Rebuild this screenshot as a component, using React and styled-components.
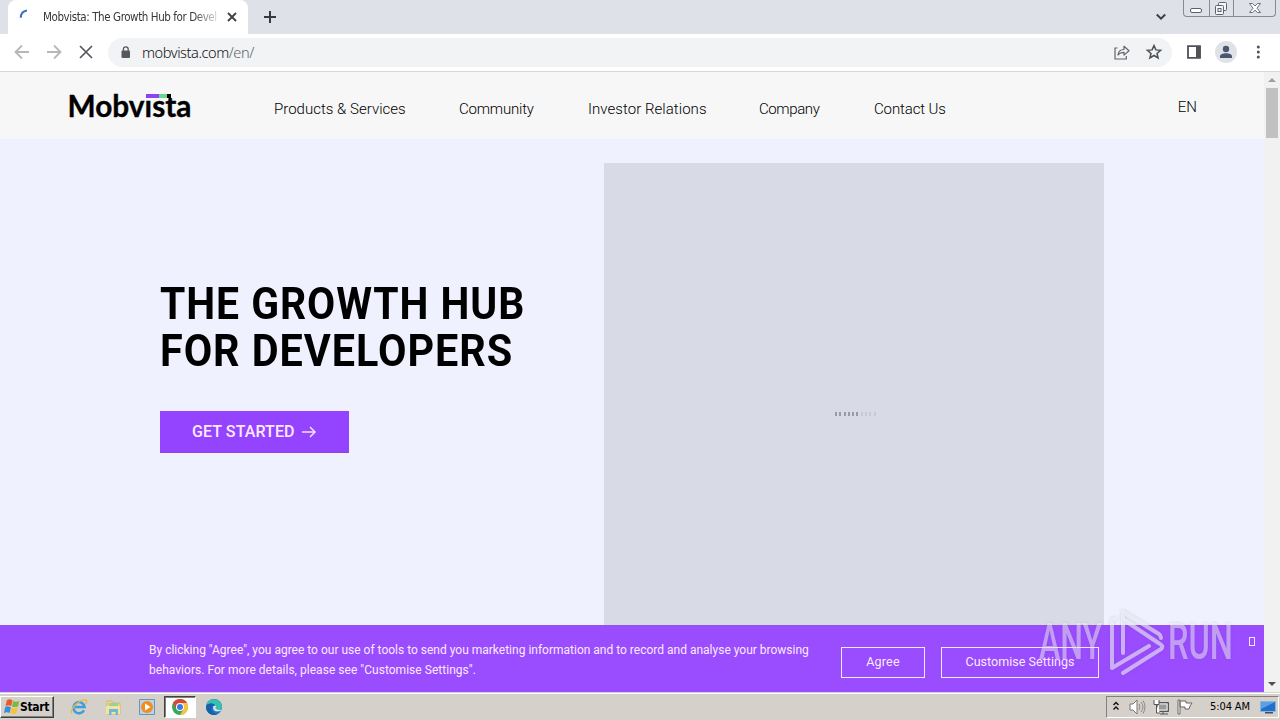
import React from "react";
import styled, { createGlobalStyle } from "styled-components";

const Global = createGlobalStyle`
  *{box-sizing:border-box}
  body{margin:0;overflow:hidden;background:#fff;font-family:Roboto,"Liberation Sans",sans-serif}
`;
const Screen = styled.div`width:1280px;height:720px;display:flex;flex-direction:column;position:relative;overflow:hidden;`;
const Spacer = styled.div`flex:1;`;

const TabStrip = styled.div`height:34px;flex:none;background:#dee1e8;display:flex;align-items:flex-start;`;
const Tab = styled.div`
  margin-left:8px;width:240px;height:34px;background:#fff;border-radius:8px 8px 0 0;display:flex;align-items:center;padding:0 10px 0 11px;
`;
const TabTitle = styled.div`
  margin-left:8px;width:174px;overflow:hidden;white-space:nowrap;color:#34373c;
  font:11.5px/18px "DejaVu Sans Condensed","DejaVu Sans",sans-serif;font-stretch:condensed;letter-spacing:-0.42px;
  mask-image:linear-gradient(90deg,#000 86%,rgba(0,0,0,.2) 100%);
`;
const IconBox = styled.div`
  flex:none;width:${p => p.$w}px;height:${p => p.$h || p.$w}px;margin-left:${p => p.$ml || 0}px;
  svg{display:block;width:100%;height:100%;overflow:visible}
`;
const WindowButtons = styled.div`display:flex;width:93px;height:17px;margin:0 4px 0 17px;border:1px solid #858a93;border-top:0;border-radius:0 0 4px 4px;overflow:hidden;`;
const WindowButton = styled.div`
  width:${p => p.$w}px;display:flex;justify-content:center;align-items:center;
  & + &{border-left:1px solid #858a93}
  svg{display:block}
`;
const Toolbar = styled.div`height:38px;flex:none;background:#fff;border-bottom:1px solid #d6d8dc;display:flex;align-items:center;padding:0 14px 1px;`;
const AddressBar = styled.div`
  flex:none;margin-left:16px;width:1064px;height:29px;border-radius:15px;background:#f1f3f5;display:flex;align-items:center;padding:0 10px 0 13px;
`;
const Url = styled.div`
  margin:0 0 0 11px;font:300 14.6px/20px "Noto Sans",sans-serif;color:#111;white-space:nowrap;letter-spacing:-0.45px;
  span{color:#5f6368}
`;
const Avatar = styled.div`flex:none;width:22px;height:22px;border-radius:50%;background:#dfe2e7;margin-left:14px;display:flex;align-items:center;justify-content:center;`;

const Viewport = styled.div`height:620px;flex:none;display:flex;`;
const Page = styled.div`width:1264px;height:620px;background:#eff1fe;display:flex;flex-direction:column;`;
const Scrollbar = styled.div`width:16px;background:#f1f1f1;display:flex;flex-direction:column;align-items:center;`;
const ScrollArrow = styled.div`
  width:16px;height:16px;display:flex;align-items:center;justify-content:center;
  &::before{content:"";border:4px solid transparent;border-top:0;border-bottom:4px solid #a0a0a0;}
  ${p => p.$down && `&::before{border:4px solid transparent;border-top:4px solid #505050;border-bottom:0;}`}
`;
const ScrollThumb = styled.div`width:12px;height:50px;background:#c1c1c1;`;

const Header = styled.header`height:67px;flex:none;background:#f7f7f7;display:flex;padding:0 67px 0 68px;`;
const Logo = styled.svg`width:124px;height:28px;margin-top:20px;overflow:visible;`;
const Nav = styled.nav`display:flex;margin-left:82px;padding-top:27px;`;
const NavItem = styled.a`
  width:${p => p.$w}px;margin-right:${p => p.$gap}px;white-space:nowrap;color:#000;
  font:300 15px/20px Roboto,sans-serif;letter-spacing:${p => p.$ls}px;
`;
const Language = styled.div`padding-top:25px;font:300 15px/20px Roboto,sans-serif;letter-spacing:0;color:#000;`;

const Hero = styled.main`height:486px;flex:none;display:flex;padding:24px 160px 0;`;
const Pitch = styled.section`width:444px;padding-top:118px;`;
const Title = styled.h1`margin:0;font:700 44px/47px Roboto,sans-serif;color:#000;white-space:nowrap;`;
const TitleLine = styled.span`display:block;letter-spacing:1px;transform:scaleX(${p => p.$stretch});transform-origin:left;`;
const CallToAction = styled.button`
  margin-top:36px;width:189px;height:42px;border:0;border-bottom:1px solid #8549d2;background:#9443ff;color:#fdeaff;display:flex;align-items:center;padding:0 32px;
  font:500 16px/20px Roboto,sans-serif;letter-spacing:.1px;white-space:nowrap;
`;
const Media = styled.section`width:500px;height:462px;background:#d8dbe5;padding:249px 0 0 231px;`;
const Loader = styled.div`display:flex;gap:2px;`;
const LoaderBar = styled.i`width:2px;height:4px;margin-right:.3px;background:${p => p.$on ? "#999ba3" : "#c7cad2"};`;

const CookieBar = styled.footer`height:67px;flex:none;background:#9a4cff;border-top:1px solid #9552e6;display:flex;color:#fbeaff;padding-left:149px;`;
const CookieText = styled.p`margin:14px 0 0;width:692px;font:400 12px/20px Roboto,sans-serif;`;
const CookieLine = styled.span`display:block;white-space:nowrap;letter-spacing:${p => p.$ls}px;`;
const CookieButton = styled.button`
  margin:21px 16px 0 0;width:${p => p.$w}px;height:31px;border:1px solid #fbeaff;background:transparent;color:#fbeaff;
  font:400 12.5px/18px Roboto,sans-serif;letter-spacing:${p => p.$ls}px;padding:0 0 1px;white-space:nowrap;
`;
const CloseGlyph = styled.div`width:6px;height:9px;border:1px solid #fbeaff;margin:11px 0 0 134px;`;

const Taskbar = styled.div`
  height:28px;flex:none;background:#d5d0c9;border-top:1px solid #d8d5cf;box-shadow:inset 0 1px #fff;display:flex;align-items:center;padding:1px 1px 0 0;
`;
const Start = styled.div`
  width:54px;height:22px;border:1px solid;border-color:#fff #404040 #404040 #fff;box-shadow:inset -1px -1px #808080;display:flex;align-items:center;padding-left:3px;
  font:700 12px/18px "DejaVu Sans Condensed","DejaVu Sans",sans-serif;letter-spacing:-0.35px;color:#000;
`;
const ActiveTask = styled.div`
  margin-left:9px;width:32px;height:22px;background:#fff;border:1px solid;border-color:#404040 #fff #fff #404040;box-shadow:inset 1px 1px #808080;
  display:flex;align-items:center;justify-content:center;
`;
const Tray = styled.div`
  width:173px;height:22px;border:1px solid;border-color:#808080 #fff #fff #808080;display:flex;align-items:center;padding-left:6px;
`;
const Clock = styled.div`width:43px;margin-left:16px;font:11px/18px "DejaVu Sans Condensed","DejaVu Sans",sans-serif;letter-spacing:-0.1px;white-space:nowrap;color:#000;`;
const Watermark = styled.svg`position:absolute;left:1030px;top:605px;width:210px;height:72px;overflow:visible;filter:drop-shadow(0 0 1.5px rgba(90,80,130,.45));`;

const navItems = [
  ["Products & Services", 132, 53, 0.02],
  ["Community", 76, 53, -0.2],
  ["Investor Relations", 119, 52, 0.05],
  ["Company", 61, 54, -0.4],
  ["Contact Us", 72, 0, -0.12],
];

const Arrow = ({ flip }) => (
  <svg viewBox="0 0 16 16" fill="none" stroke="#b5b7ba" strokeWidth="1.8">
    <path d={flip ? "M1 8h13M8 1.5 14.5 8 8 14.5" : "M15 8H2M8 1.5 1.5 8 8 14.5"} />
  </svg>
);

const Browser = () => (
  <>
    <TabStrip>
      <Tab>
        <IconBox $w={16}><svg viewBox="0 0 16 16" fill="none" stroke="#3d6fc2" strokeWidth="2"><path d="M1.8 8.8C1.8 5 4.2 2.2 8 1.6" /></svg></IconBox>
        <TabTitle>Mobvista: The Growth Hub for Developers</TabTitle>
        <IconBox $w={8} $ml={11}><svg viewBox="0 0 8 8" stroke="#3e4146" strokeWidth="1.8"><path d="M0 0l8 8M8 0 0 8" /></svg></IconBox>
      </Tab>
      <IconBox $w={12} $h={34} $ml={16}><svg viewBox="0 0 12 34" stroke="#36393e" strokeWidth="2"><path d="M0 17h12M6 11v12" /></svg></IconBox>
      <Spacer />
      <IconBox $w={10} $h={34}><svg viewBox="0 0 10 34" fill="none" stroke="#3c4047" strokeWidth="2"><path d="m.8 14.5 4.2 4.2 4.2-4.2" /></svg></IconBox>
      <WindowButtons>
        <WindowButton $w={25}><svg width="13" height="17"><rect x="0.5" y="8.5" width="11" height="4" rx="1.5" fill="#fff" stroke="#5d626b" /></svg></WindowButton>
        <WindowButton $w={25}><svg width="14" height="17" fill="#f4f5f7" stroke="#5d626b"><rect x="3.5" y="2.5" width="8" height="8" rx="1" /><rect x="0.5" y="5.5" width="8" height="9" rx="1" /><rect x="3" y="8.5" width="3" height="3" /></svg></WindowButton>
        <WindowButton $w={42}><svg width="14" height="17" fill="#fff" stroke="#5d626b" strokeWidth=".9"><path d="M1.500 3.500h3L7 6l2.500-2.500h3L9 8.200l3.500 4.300h-3L7 10.200 4.500 12.500h-3L5 8.200z" /></svg></WindowButton>
      </WindowButtons>
    </TabStrip>
    <Toolbar>
      <IconBox $w={16}><Arrow /></IconBox>
      <IconBox $w={16} $ml={16}><Arrow flip /></IconBox>
      <IconBox $w={12} $ml={18}><svg viewBox="0 0 12 12" stroke="#55585c" strokeWidth="1.7"><path d="M0 0l12 12M12 0 0 12" /></svg></IconBox>
      <AddressBar>
        <IconBox $w={10} $h={13}><svg viewBox="0 0 10 13"><rect x="0.5" y="4.500" width="8.500" height="7.5" rx="1" fill="#55585d" /><path d="M2.400 5V3.200a2.400 2.400 0 0 1 4.800 0V5" fill="none" stroke="#55585d" strokeWidth="1.300" /></svg></IconBox>
        <Url>mobvista.com<span>/en/</span></Url>
        <Spacer />
        <IconBox $w={16}><svg viewBox="0 0 16 16" fill="none" stroke="#62666b" strokeWidth="1.2"><path d="M3.500 4H1v11h11.300v-3" /><path d="M4 11c.4-3.800 2.400-5.400 6-5.500V2.300L15 6.700l-5 4.400V8.300C7.200 8.300 5.500 9 4 11z" strokeLinejoin="round" /></svg></IconBox>
        <IconBox $w={16} $ml={16}><svg viewBox="0 0 16 16" fill="none" stroke="#4c5157" strokeWidth="1.5"><path d="m8 1.600 1.900 4.300 4.700.4-3.600 3.100 1.100 4.600L8 11.500 3.900 14 5 9.400 1.400 6.300l4.700-.4z" /></svg></IconBox>
      </AddressBar>
      <IconBox $w={14} $ml={15}><svg viewBox="0 0 14 14"><path d="M1 1.200h12v11.600H1z" fill="none" stroke="#505258" strokeWidth="1.800" /><path d="M9 1h4.500v12H9z" fill="#505258" /></svg></IconBox>
      <Avatar><svg width="14" height="14" fill="#4c5670"><circle cx="7" cy="4" r="3.200" /><path d="M1 13v-1.500C1 9.200 4 8.300 7 8.300s6 .9 6 3.200V13z" /></svg></Avatar>
      <IconBox $w={4} $h={14} $ml={19}><svg viewBox="0 0 4 14" fill="#505258"><circle cx="2.3" cy="2" r="1.500" /><circle cx="2.3" cy="7" r="1.500" /><circle cx="2.3" cy="12" r="1.500" /></svg></IconBox>
    </Toolbar>
  </>
);

const Site = () => (
  <Page>
    <Header>
      <Logo viewBox="0 0 124 28">
        <text x="-0.5" y="24.500" textLength="124" lengthAdjust="spacingAndGlyphs" fontFamily="Lato,sans-serif" fontWeight="700" fontSize="30" stroke="#000" strokeWidth=".35">Mobvista</text>
        <path d="M77 0h15v7.800H77zM92 0h14v5H92zM103 0h3v6h-3z" fill="#f7f7f7" />
        <path d="M78 2h14v4H78z" fill="#8c43f5" /><path d="M91 2h8v4h-8z" fill="#66d889" /><path d="M99 2h4v4h-4z" />
      </Logo>
      <Nav>{navItems.map(([label, w, gap, ls]) => <NavItem key={label} $w={w} $gap={gap} $ls={ls}>{label}</NavItem>)}</Nav>
      <Spacer />
      <Language>EN</Language>
    </Header>
    <Hero>
      <Pitch>
        <Title><TitleLine $stretch={0.93}>THE GROWTH HUB</TitleLine><TitleLine $stretch={0.94}>FOR DEVELOPERS</TitleLine></Title>
        <CallToAction>GET STARTED<IconBox $w={14} $h={12} $ml={7}><svg viewBox="0 0 14 12" fill="none" stroke="#f8dfff" strokeWidth="1.500"><path d="M0 6h13M8 1l5 5-5 5" /></svg></IconBox></CallToAction>
      </Pitch>
      <Media><Loader>{Array.from({ length: 10 }, (_, i) => <LoaderBar key={i} $on={i < 6} />)}</Loader></Media>
    </Hero>
    <CookieBar>
      <CookieText>
        <CookieLine $ls={0}>By clicking "Agree", you agree to our use of tools to send you marketing information and to record and analyse your browsing</CookieLine>
        <CookieLine $ls={0.03}>behaviors. For more details, please see "Customise Settings".</CookieLine>
      </CookieText>
      <CookieButton $w={84} $ls={0.2}>Agree</CookieButton>
      <CookieButton $w={158} $ls={0.03}>Customise Settings</CookieButton>
      <CloseGlyph />
    </CookieBar>
  </Page>
);

const WindowsTaskbar = () => (
  <Taskbar>
    <Start>
      <svg width="16" height="16"><path d="M3 1c2-1 3.500-.8 5.500.2L7.300 7C5 6 3.800 6 1.500 7z" fill="#e75c29" /><path d="M9.300 2c2 1 4 .8 6 0L14 7.500c-2 .8-3.800.8-6 0z" fill="#7db83a" /><path d="M1.200 8c2-1 3.500-.8 5.700.2L5.700 14C3.700 13 2.300 13 0 14z" fill="#3d8ed8" /><path d="M7.700 8.800c2 1 4 .8 6 0l-1.300 5.500c-2 .9-3.700.8-5.900-.1z" fill="#f5c336" /></svg>
      Start
    </Start>
    <IconBox $w={18} $ml={16}><svg viewBox="0 0 18 18" fill="none"><path d="M14 12.300A5.600 5.600 0 1 1 14.600 9H5" stroke="#3c9edb" strokeWidth="2.500" /><path d="M2 15.500C-1 12 9 1 16 2c1.500 1 .5 3 0 4" stroke="#e6b94c" strokeWidth="1.300" /></svg></IconBox>
    <IconBox $w={17} $ml={17}><svg viewBox="0 0 17 17"><path d="M2 2h5l1 2h7v11H2z" fill="#efd880" stroke="#c3ac59" strokeWidth=".6" /><path d="M4 4h9v5H4z" fill="#9ccf99" /><path d="M1 7h14v8H1z" fill="#f6e49a" /><path d="M4 16V10h9v6h-2.500v-3h-4v3z" fill="#70b7d8" /></svg></IconBox>
    <IconBox $w={16} $ml={17}><svg viewBox="0 0 16 16"><path d="M.5.5h15v15H.5z" fill="#b9d3e9" stroke="#6795bd" /><circle cx="8" cy="8" r="6" fill="#f38d1d" /><path d="M6 4.500 11.500 8 6 11.500z" fill="#fff" /></svg></IconBox>
    <ActiveTask><svg width="16" height="16"><circle cx="8" cy="8" r="8" fill="#3ba55a" /><path d="M1.100 4A8 8 0 0 1 15 4H8L4.500 10z" fill="#dd4634" /><path d="M8 4h7A8 8 0 0 1 8 16l3.500-6z" fill="#f7c63d" /><circle cx="8" cy="8" r="4" fill="#fff" /><circle cx="8" cy="8" r="3" fill="#3b78e7" /></svg></ActiveTask>
    <IconBox $w={16} $ml={10}><svg viewBox="0 0 16 16"><circle cx="8" cy="8" r="8" fill="#1677c5" /><path d="M0 7C1 1 6-.5 10 .5c4 1 6 4 6 7 0 4-5 4-6.500 2.300C11 8 9 4.500 5 4.500 2.500 4.500.7 5.500 0 7z" fill="#38bfae" /><path d="M7 8.500C7 12 10 13.300 14.500 12L16 10c-2 1.500-6 1-6.500-1.200 1-1 .7-2-.2-2.300C8 6.300 7 7.300 7 8.500z" fill="#d6e3df" /><path d="M0 8c.5-4 7-4.500 9-1.500C6 6 4.500 9 6 12c1 2 3 3 5 3.400C5 17.500 0 13 0 8z" fill="#175fa9" /></svg></IconBox>
    <Spacer />
    <Tray>
      <IconBox $w={6} $h={10}><svg viewBox="0 0 6 10" fill="none" stroke="#111" strokeWidth="1.400"><path d="m.5 3 2.500-2.500L5.500 3M.5 7.500 3 5l2.500 2.500" /></svg></IconBox>
      <IconBox $w={17} $h={16} $ml={10}><svg viewBox="0 0 17 16" fill="none" stroke="#777"><path d="M1 5h3l4-4v14l-4-4H1z" fill="#fff" /><path d="M10 5q2 3 0 6M12 3q4 5 0 10M14 1.500q4 6.500 0 13" strokeWidth=".8" /></svg></IconBox>
      <IconBox $w={17} $h={16} $ml={7}><svg viewBox="0 0 17 16"><path d="M4 3.500h11.500v9H4z" fill="#999" stroke="#555" /><path d="M5.500 5h8.500v6H5.500z" fill="none" stroke="#eee" /><path d="M7 15h8M10 12.500V15" fill="none" stroke="#555" /><path d="M1 1v4.500h5V1M3.500 5.500V14H7" fill="#fff" stroke="#555" /></svg></IconBox>
      <IconBox $w={17} $h={16} $ml={7}><svg viewBox="0 0 17 16" fill="#fff" stroke="#666"><path d="M1 1h2v14H1zM3 2h6v2h6l-2 3-1 3H8V8H3z" /></svg></IconBox>
      <Clock>5:04 AM</Clock>
      <IconBox $w={16} $h={14} $ml={7}><svg viewBox="0 0 16 14"><path d="M.5 1.500h15v10H.5z" fill="#2370cb" stroke="#8db4dd" /><path d="M1 2h14L1 9z" fill="#5ba0e5" /><path d="M5 12h8v1.500H5z" fill="#424e65" /></svg></IconBox>
    </Tray>
  </Taskbar>
);

export default function App() {
  return (
    <Screen>
      <Global />
      <Browser />
      <Viewport>
        <Site />
        <Scrollbar><ScrollArrow /><ScrollThumb /><Spacer /><ScrollArrow $down /></Scrollbar>
      </Viewport>
      <WindowsTaskbar />
      <Watermark viewBox="0 0 210 72">
        <g fill="#fff" fillOpacity=".46" fontFamily="Roboto,sans-serif" fontWeight="500" fontSize="50">
          <text x="9" y="54" textLength="63" lengthAdjust="spacingAndGlyphs">ANY</text>
          <text x="138" y="54" textLength="65" lengthAdjust="spacingAndGlyphs">RUN</text>
        </g>
        <g fill="none" stroke="#fff" strokeOpacity=".55" strokeWidth="4" strokeLinejoin="round" strokeLinecap="round">
          <path d="M85 14q-3 0-3 4v45l37-22M93 48V7l36 22q2 2 2 4M93 68l38-24q3-3-1-5L94 15" />
        </g>
      </Watermark>
    </Screen>
  );
}
